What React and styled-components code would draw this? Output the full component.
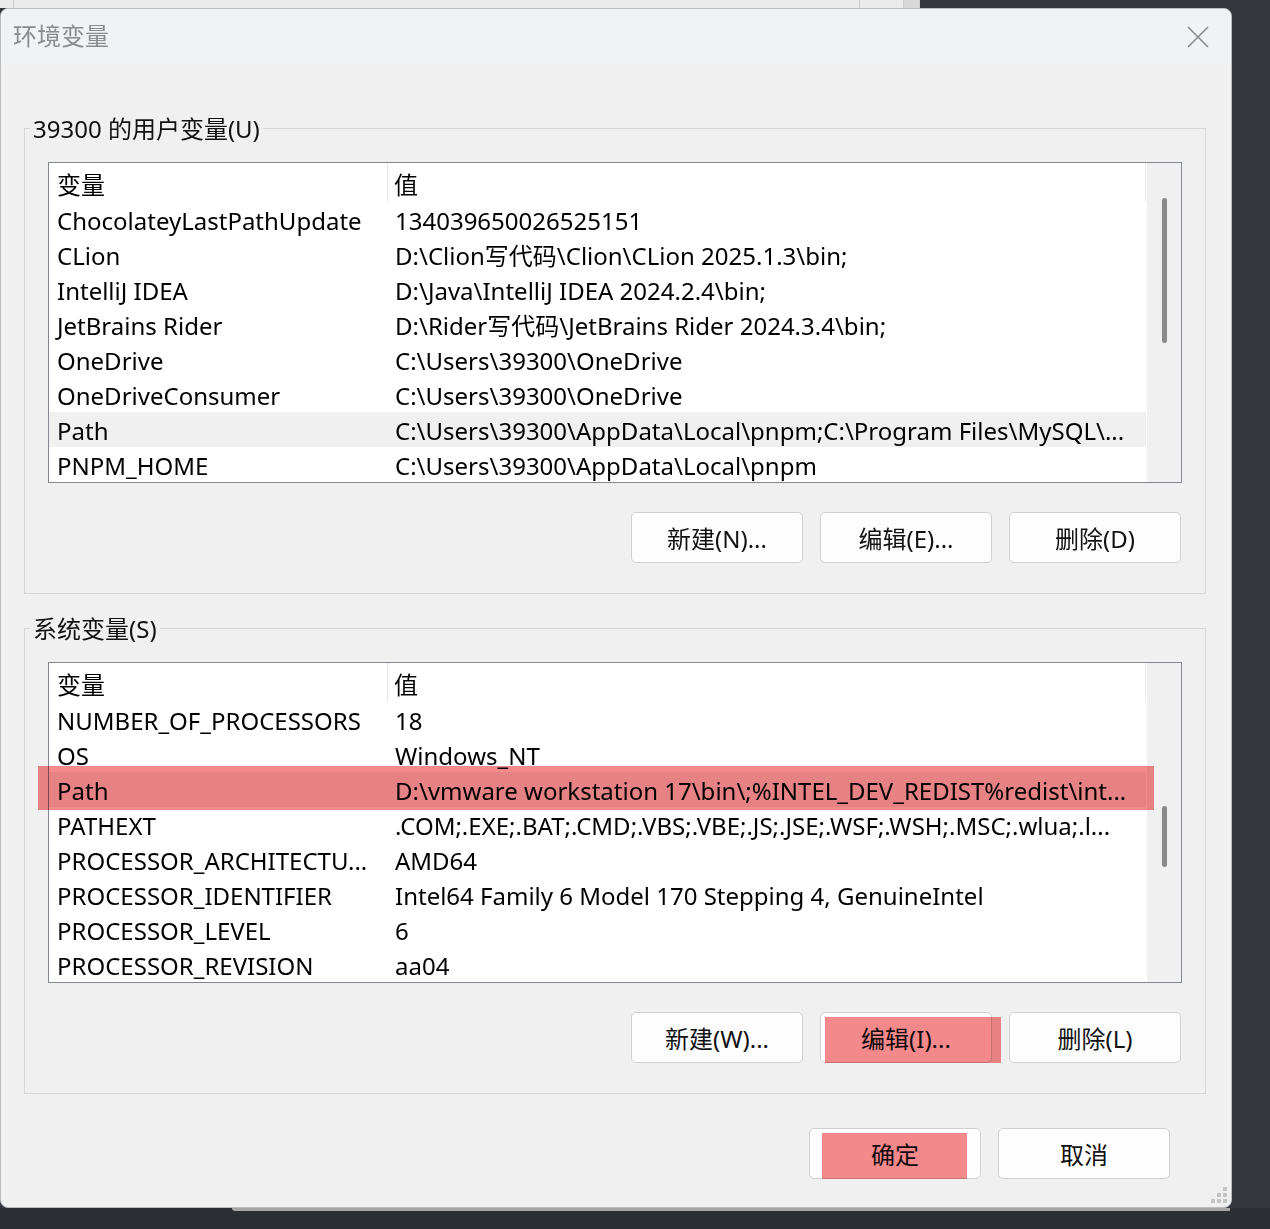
import styled, { createGlobalStyle } from 'styled-components';

const GlobalStyle = createGlobalStyle`
  html, body {
    margin: 0;
    padding: 0;
    background: #303438;
  }
  body {
    font-family: "Noto Sans", "Noto Sans CJK SC", sans-serif;
    color: #000;
  }
`;

const Page = styled.div`
  width: 1270px;
  height: 1229px;
  background: #33373b;
  display: flex;
  flex-direction: column;
  overflow: hidden;
`;

const BackStrip = styled.div`
  height: 8px;
  display: flex;
`;

const BackLight = styled.div`
  width: 920px;
  background: #ebebeb;
  display: flex;
`;

const BackCell = styled.div`
  width: ${p => p.w}px;
  border-right: 1px solid #cdcdcd;
  background: ${p => p.bg || 'transparent'};
`;

const Dialog = styled.div`
  position: relative;
  width: 1232px;
  height: 1200px;
  box-sizing: border-box;
  background: #f0f0f0;
  border: 1px solid #bcbcbc;
  border-radius: 8px;
  display: flex;
  flex-direction: column;
  overflow: hidden;
`;

const TitleBar = styled.div`
  height: 56px;
  background: #eff3f6;
  display: flex;
  align-items: center;
  justify-content: space-between;
  padding: 0 22px 0 12px;
`;

const Title = styled.div`
  font-size: 24px;
  color: #8b8b8b;
  margin-top: -6px;
`;

const Body = styled.div`
  flex: 1;
  padding: 47px 25px 0 23px;
  display: flex;
  flex-direction: column;
`;

const Group = styled.fieldset`
  margin: ${p => p.mt || 0}px 0 0 0;
  padding: 18px 23px 30px 23px;
  border: 1px solid #d7d7d7;
  min-width: 0;
`;

const Legend = styled.legend`
  font-size: 24px;
  line-height: 30px;
  padding: 2px 3px 0;
  margin-left: -18px;
  color: #111;
`;

const ListBox = styled.div`
  height: 321px;
  box-sizing: border-box;
  border: 1px solid #828790;
  background: #fff;
  display: flex;
`;

const Table = styled.div`
  flex: 1;
  min-width: 0;
  display: flex;
  flex-direction: column;
`;

const HeaderRow = styled.div`
  height: 40px;
  display: grid;
  grid-template-columns: 339px 1fr;
  border-right: 1px solid #ececec;
  margin-right: 1px;
`;

const HeaderCell = styled.div`
  font-size: 24px;
  display: flex;
  align-items: center;
  padding: 2px 0 0 ${p => (p.first ? 8 : 6)}px;
  border-right: ${p => (p.first ? '1px solid #e5e5e5' : 'none')};
`;

const Row = styled.div`
  position: relative;
  height: 35px;
  display: grid;
  grid-template-columns: 340px 1fr;
  background: ${p => (p.selected ? '#f0f0f0' : 'transparent')};
  margin-right: 1px;
`;

const Cell = styled.div`
  font-size: 24px;
  height: 35px;
  box-sizing: border-box;
  padding: 2px 0 0 ${p => (p.first ? 8 : 6)}px;
  line-height: 33px;
  white-space: nowrap;
  overflow: hidden;
`;

const Mark = styled.div`
  position: absolute;
  top: ${p => p.t}px;
  bottom: ${p => p.b}px;
  left: ${p => p.l}px;
  right: ${p => p.r}px;
  background: #f58a8c;
  mix-blend-mode: multiply;
  pointer-events: none;
`;

const ScrollTrack = styled.div`
  width: 34px;
  background: #f0f0f0;
  display: flex;
  justify-content: center;
`;

const Thumb = styled.div`
  width: 5px;
  margin-top: ${p => p.top}px;
  height: ${p => p.h}px;
  border-radius: 3px;
  background: #8a8a8a;
`;

const ButtonRow = styled.div`
  display: flex;
  justify-content: flex-end;
  gap: 17px;
  margin-top: 29px;
  padding-right: 1px;
`;

const Button = styled.div`
  position: relative;
  width: 172px;
  height: 51px;
  box-sizing: border-box;
  border: 1px solid #d0d0d0;
  border-radius: 5px;
  background: #fdfdfd;
  display: flex;
  align-items: center;
  justify-content: center;
  font-size: 24px;
  color: #111;
`;

const Footer = styled.div`
  display: flex;
  justify-content: flex-end;
  gap: 17px;
  margin-top: 34px;
  padding-right: 36px;
`;

const Grip = styled.svg`
  position: absolute;
  right: 3px;
  bottom: 3px;
`;

const BottomStrip = styled.div`
  height: 21px;
  background: #2b2e32;
`;

const ShadowEdge = styled.div`
  margin-left: 232px;
  width: 998px;
  height: 3px;
  background: #a6a6a6;
  border-bottom-left-radius: 4px;
`;

const userVars = [
  ['ChocolateyLastPathUpdate', '134039650026525151'],
  ['CLion', 'D:\\Clion写代码\\Clion\\CLion 2025.1.3\\bin;'],
  ['IntelliJ IDEA', 'D:\\Java\\IntelliJ IDEA 2024.2.4\\bin;'],
  ['JetBrains Rider', 'D:\\Rider写代码\\JetBrains Rider 2024.3.4\\bin;'],
  ['OneDrive', 'C:\\Users\\39300\\OneDrive'],
  ['OneDriveConsumer', 'C:\\Users\\39300\\OneDrive'],
  ['Path', 'C:\\Users\\39300\\AppData\\Local\\pnpm;C:\\Program Files\\MySQL\\...'],
  ['PNPM_HOME', 'C:\\Users\\39300\\AppData\\Local\\pnpm'],
];

const sysVars = [
  ['NUMBER_OF_PROCESSORS', '18'],
  ['OS', 'Windows_NT'],
  ['Path', 'D:\\vmware workstation 17\\bin\\;%INTEL_DEV_REDIST%redist\\int...'],
  ['PATHEXT', '.COM;.EXE;.BAT;.CMD;.VBS;.VBE;.JS;.JSE;.WSF;.WSH;.MSC;.wlua;.l...'],
  ['PROCESSOR_ARCHITECTU...', 'AMD64'],
  ['PROCESSOR_IDENTIFIER', 'Intel64 Family 6 Model 170 Stepping 4, GenuineIntel'],
  ['PROCESSOR_LEVEL', '6'],
  ['PROCESSOR_REVISION', 'aa04'],
];

function VarList({ rows, selected, marked, thumbTop, thumbH }) {
  return (
    <ListBox>
      <Table>
        <HeaderRow>
          <HeaderCell first>变量</HeaderCell>
          <HeaderCell>值</HeaderCell>
        </HeaderRow>
        {rows.map(([name, value], i) => (
          <Row key={name} selected={i === selected}>
            <Cell first>{name}</Cell>
            <Cell>{value}</Cell>
            {marked && i === selected && <Mark t={-6} b={-3} l={-11} r={-8} />}
          </Row>
        ))}
      </Table>
      <ScrollTrack>
        <Thumb top={thumbTop} h={thumbH} />
      </ScrollTrack>
    </ListBox>
  );
}

function CloseIcon() {
  return (
    <svg width="22" height="22" viewBox="0 0 22 22">
      <path d="M1 1 L21 21 M21 1 L1 21" stroke="#8a8a8a" strokeWidth="1.6" fill="none" />
    </svg>
  );
}

export default function App() {
  return (
    <Page>
      <GlobalStyle />
      <BackStrip>
        <BackLight>
          <BackCell w={13} />
          <BackCell w={846} />
          <BackCell w={43} />
          <BackCell w={15} bg="#d8d8d8" />
        </BackLight>
      </BackStrip>
      <Dialog>
        <TitleBar>
          <Title>环境变量</Title>
          <CloseIcon />
        </TitleBar>
        <Body>
          <Group>
            <Legend>39300 的用户变量(U)</Legend>
            <VarList rows={userVars} selected={6} thumbTop={35} thumbH={145} />
            <ButtonRow>
              <Button>新建(N)...</Button>
              <Button>编辑(E)...</Button>
              <Button>删除(D)</Button>
            </ButtonRow>
          </Group>
          <Group mt={18}>
            <Legend>系统变量(S)</Legend>
            <VarList rows={sysVars} selected={2} marked thumbTop={143} thumbH={61} />
            <ButtonRow>
              <Button>新建(W)...</Button>
              <Button>
                编辑(I)...
                <Mark t={4} b={-1} l={4} r={-10} />
              </Button>
              <Button>删除(L)</Button>
            </ButtonRow>
          </Group>
          <Footer>
            <Button>
              确定
              <Mark t={4} b={-1} l={12} r={13} />
            </Button>
            <Button>取消</Button>
          </Footer>
        </Body>
        <Grip width="18" height="18" viewBox="0 0 18 18">
          <rect x="13" y="1" width="4" height="4" fill="#c4c4c4" />
          <rect x="7" y="7" width="4" height="4" fill="#c4c4c4" />
          <rect x="13" y="7" width="4" height="4" fill="#c4c4c4" />
          <rect x="1" y="13" width="4" height="4" fill="#c4c4c4" />
          <rect x="7" y="13" width="4" height="4" fill="#c4c4c4" />
          <rect x="13" y="13" width="4" height="4" fill="#c4c4c4" />
        </Grip>
      </Dialog>
      <BottomStrip>
        <ShadowEdge />
      </BottomStrip>
    </Page>
  );
}
